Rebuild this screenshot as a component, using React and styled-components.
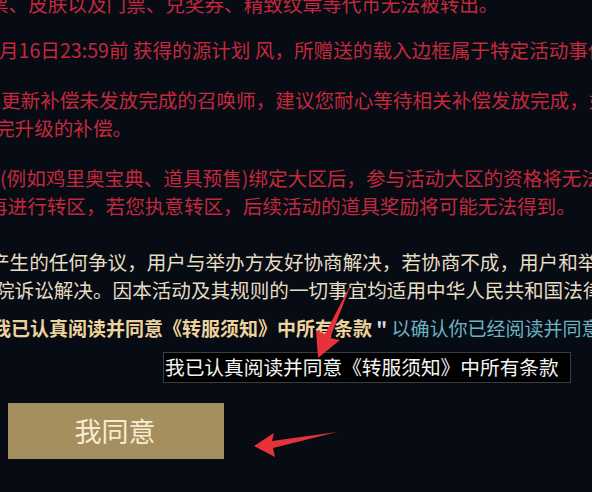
import React from "react";
import styled, { createGlobalStyle } from "styled-components";

const GlobalStyle = createGlobalStyle`
  html, body {
    margin: 0;
    padding: 0;
    background: #070c14;
  }
  body {
    font-family: "Noto Sans CJK SC", "Noto Sans", sans-serif;
  }
`;

const colors = {
  red: "#c4283c",
  cream: "#e6dcc2",
};

export default function App() {
  return (
    <>
      <GlobalStyle />
      <Page>
        <Paragraph $top={-10}>
          <Line $color={colors.red} $shift={-11}>
            票、皮肤以及门票、兑奖券、精致纹章等代币无法被转出。
          </Line>
        </Paragraph>

        <Paragraph $top={18}>
          <Line $color={colors.red} $shift={-1}>
            月16日23:59前 获得的源计划 风，所赠送的载入边框属于特定活动事件
          </Line>
        </Paragraph>

        <Paragraph $top={22}>
          <Line $color={colors.red} $shift={1}>
            更新补偿未发放完成的召唤师，建议您耐心等待相关补偿发放完成，如
          </Line>
          <Line $color={colors.red} $shift={-5}>
            完升级的补偿。
          </Line>
        </Paragraph>

        <Paragraph $top={22}>
          <Line $color={colors.red} $shift={0}>
            (例如鸡里奥宝典、道具预售)绑定大区后，参与活动大区的资格将无法
          </Line>
          <Line $color={colors.red} $shift={-12}>
            再进行转区，若您执意转区，后续活动的道具奖励将可能无法得到。
          </Line>
        </Paragraph>

        <Paragraph $top={28}>
          <Line $color={colors.cream} $shift={-10}>
            产生的任何争议，用户与举办方友好协商解决，若协商不成，用户和举
          </Line>
          <Line $color={colors.cream} $shift={-5}>
            院诉讼解决。因本活动及其规则的一切事宜均适用中华人民共和国法律
          </Line>
        </Paragraph>

        <Paragraph $top={10}>
          <Line $color="#ecd29c" $shift={-8} $size={19}>
            <Strong>我已认真阅读并同意《转服须知》中所有条款</Strong>
            <Quote> " </Quote>
            <Hint>以确认你已经阅读并同意</Hint>
          </Line>
        </Paragraph>

        <AgreeButton>我同意</AgreeButton>

        <Tooltip>我已认真阅读并同意《转服须知》中所有条款</Tooltip>

        <Arrow viewBox="0 0 592 492">
          <polygon points="352,282 330,338 340,340 318,358 316,330 325,334" />
          <polygon points="337,432 272,441 274,433 254,446 275,457 273,448" />
        </Arrow>
      </Page>
    </>
  );
}

const Page = styled.div`
  position: relative;
  width: 592px;
  height: 492px;
  overflow: hidden;
  background: #070c14;
`;

const Paragraph = styled.div`
  margin-top: ${(p) => p.$top}px;
`;

const Line = styled.div`
  color: ${(p) => p.$color};
  font-size: ${(p) => p.$size || 19.6}px;
  line-height: 28px;
  white-space: nowrap;
  margin-left: ${(p) => p.$shift}px;
`;

const Strong = styled.span`
  font-weight: 700;
`;

const Quote = styled.span`
  color: #d8dde0;
  font-weight: 700;
  white-space: pre;
`;

const Hint = styled.span`
  color: #6cb2c0;
`;

const AgreeButton = styled.button`
  display: flex;
  align-items: center;
  justify-content: center;
  margin: 61px 0 0 8px;
  width: 216px;
  height: 56px;
  padding: 0 2px 2px 0;
  border: none;
  background: #a68f5f;
  color: #f6edd0;
  font-family: "Noto Sans CJK SC", sans-serif;
  font-size: 27px;
`;

const Tooltip = styled.div`
  position: absolute;
  left: 163px;
  top: 352px;
  width: 408px;
  height: 31px;
  box-sizing: border-box;
  padding-left: 1px;
  background: #000;
  border: 1px solid #3a3d44;
  color: #f4f4f4;
  font-size: 19.7px;
  line-height: 28px;
  white-space: nowrap;
`;

const Arrow = styled.svg`
  position: absolute;
  left: 0;
  top: 0;
  width: 592px;
  height: 492px;
  pointer-events: none;

  polygon {
    fill: #e8323a;
  }
`;
